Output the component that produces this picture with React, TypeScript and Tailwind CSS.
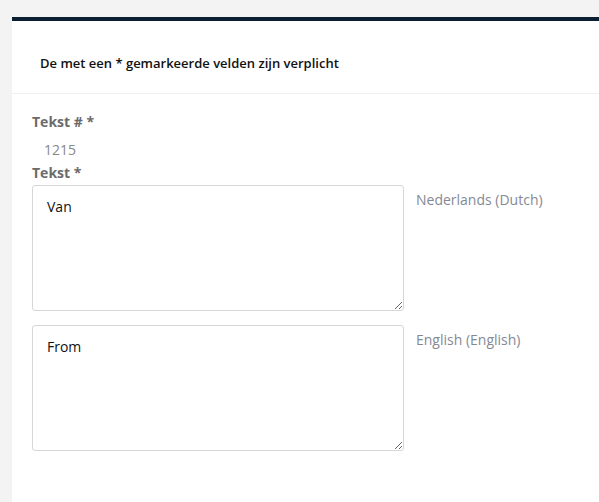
import React from "react";

const font = { fontFamily: '"Open Sans", "Liberation Sans", sans-serif' };

function Row({ value, lang }: { value: string; lang: string }) {
  return (
    <div className="flex items-start">
      <textarea
        defaultValue={value}
        className="w-[372px] h-[126px] shrink-0 border border-[#d6d6d6] rounded-[3px] pl-[14px] pr-[14px] pt-[11px] text-[14px] leading-[20px] text-[#111] bg-white outline-none resize-y font-['Open_Sans',sans-serif]"
      />
      <div className="ml-[12px] pt-[5px] text-[14px] leading-[20px] text-[#858994]">{lang}</div>
    </div>
  );
}

export default function App() {
  return (
    <div className="min-h-[502px] bg-[#f3f3f3] pt-[17px] pl-[12px] overflow-hidden" style={font}>
      <div className="bg-white border-t-4 border-[#0b1f33] min-h-[485px] w-[700px]">
        <div className="pl-[28px] pt-[33px] pb-[21px] border-b border-[#f0f0f0] text-[13px] leading-[18px] font-semibold text-[#111]">
          De met een * gemarkeerde velden zijn verplicht
        </div>
        <div className="pl-[20px] pt-[18px]">
          <div className="text-[14px] leading-[20px] font-bold text-[#6b6b6b]">Tekst # *</div>
          <div className="pl-[12px] pt-[8px] pb-[3px] text-[14px] leading-[20px] text-[#888]">1215</div>
          <div className="text-[14px] leading-[20px] font-bold text-[#6b6b6b] mb-[2px]">Tekst *</div>
          <div className="flex flex-col gap-[14px]">
            <Row value="Van" lang="Nederlands (Dutch)" />
            <Row value="From" lang="English (English)" />
          </div>
        </div>
      </div>
    </div>
  );
}
